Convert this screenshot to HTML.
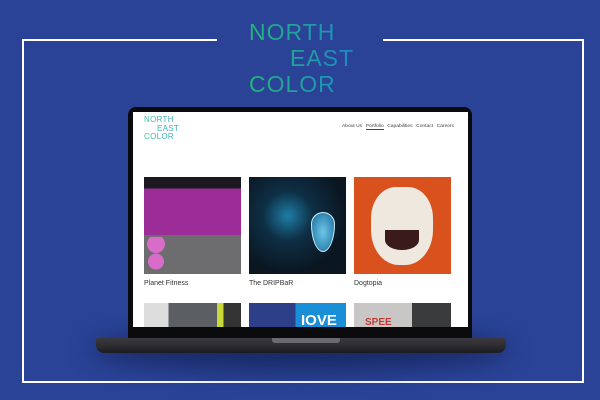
<!DOCTYPE html>
<html><head><meta charset="utf-8"><style>
*{margin:0;padding:0;box-sizing:border-box}
body{width:600px;height:400px;background:#2a4397;position:relative;overflow:hidden;font-family:"Liberation Sans",sans-serif}
.frame{position:absolute;left:22px;top:40px;width:562px;height:343px;border:2px solid #fff;border-top:none}
.tl{position:absolute;top:39px;height:2px;background:#fff}
.logo{position:absolute;left:249px;top:19px;font-size:23px;line-height:26px;letter-spacing:1px;font-weight:normal;background:linear-gradient(90deg,#22b57a,#1d8ac4);-webkit-background-clip:text;color:transparent}
.shadow{position:absolute;left:90px;top:330px;width:420px;height:40px;border-radius:50%;background:rgba(10,20,60,.55);filter:blur(12px)}
.bezel{position:absolute;left:128px;top:107px;width:344px;height:232px;background:#0b0b0d;border-radius:8px 8px 0 0}
.screen{position:absolute;left:133px;top:112px;width:335px;height:215px;background:#fff;overflow:hidden}
.base{position:absolute;left:96px;top:338px;width:410px;height:15px;background:linear-gradient(#3b3a40,#2a292e 60%,#1c1b1f);border-radius:2px 2px 8px 8px}
.notch{position:absolute;left:272px;top:338px;width:68px;height:5px;background:#6b6a70;border-radius:0 0 3px 3px}
.sl{position:absolute;left:11px;top:4px;font-size:8px;line-height:8.5px;letter-spacing:.3px;background:linear-gradient(90deg,#39c0a0,#3d9fd0);-webkit-background-clip:text;color:transparent}
.nav{position:absolute;left:209px;top:12px;font-size:4.9px;color:#444;white-space:nowrap}
.nav span{margin-right:3.6px}
.nav .a{border-bottom:.6px solid #444}
.im{position:absolute;width:97px;height:97px}
.cap{position:absolute;top:168px;font-size:7px;color:#333}
</style></head><body>
<div class="frame"></div>
<div class="tl" style="left:22px;width:195px"></div>
<div class="tl" style="left:383px;width:201px"></div>
<div class="logo">NORTH<br><span style="padding-left:41px">EAST</span><br>COLOR</div>
<div class="shadow"></div>
<div class="bezel"></div>
<div class="screen">
<div class="sl">NORTH<br><span style="padding-left:13px">EAST</span><br>COLOR</div>
<div class="nav"><span>About Us</span><span class="a">Portfolio</span><span>Capabilities</span><span>Contact</span><span>Careers</span></div>
<div class="im" style="left:11px;top:65px;background:linear-gradient(#1a1a1e 0 12%,#9c2d98 12% 60%,#6d6d6f 60%)"></div>
<div style="position:absolute;left:14px;top:125px;width:18px;height:35px;background:radial-gradient(circle at 50% 20%,#d86cc9 30%,transparent 31%),radial-gradient(circle at 50% 70%,#d86cc9 30%,transparent 31%)"></div>
<div class="im" style="left:116px;top:65px;background:radial-gradient(ellipse at 40% 40%,#1d7ea6 0,#0e2f45 30%,#0a1620 70%)"></div>
<div style="position:absolute;left:178px;top:100px;width:24px;height:40px;border-radius:50% 50% 50% 50%/30% 30% 70% 70%;background:radial-gradient(#6ec7ea,#166a99);border:1.5px solid #cfeefa"></div>
<div class="im" style="left:221px;top:65px;background:#d9521d"></div>
<div style="position:absolute;left:238px;top:75px;width:62px;height:78px;border-radius:40% 40% 45% 45%;background:#eee8df"></div>
<div style="position:absolute;left:252px;top:118px;width:34px;height:20px;border-radius:0 0 50% 50%;background:#3b1a1c"></div>
<div class="cap" style="left:11px">Planet Fitness</div>
<div class="cap" style="left:116px">The DRIPBaR</div>
<div class="cap" style="left:221px">Dogtopia</div>
<div class="im" style="left:11px;top:191px;background:linear-gradient(90deg,#ddd 0 25%,#5b5e63 25% 75%,#c9d93a 75% 82%,#333 82%)"></div>
<div class="im" style="left:116px;top:191px;background:linear-gradient(90deg,#2d3f88 0 48%,#1a8ed6 48%)"></div>
<div style="position:absolute;left:168px;top:200px;font-size:15px;font-weight:bold;color:#fff">IOVE</div>
<div class="im" style="left:221px;top:191px;background:linear-gradient(90deg,#c9c7c5 0 60%,#3a3b3d 60%)"></div>
<div style="position:absolute;left:232px;top:205px;font-size:10px;font-weight:bold;color:#c63a36">SPEE</div>
</div>
<div class="base"></div>
<div class="notch"></div>
</body></html>
